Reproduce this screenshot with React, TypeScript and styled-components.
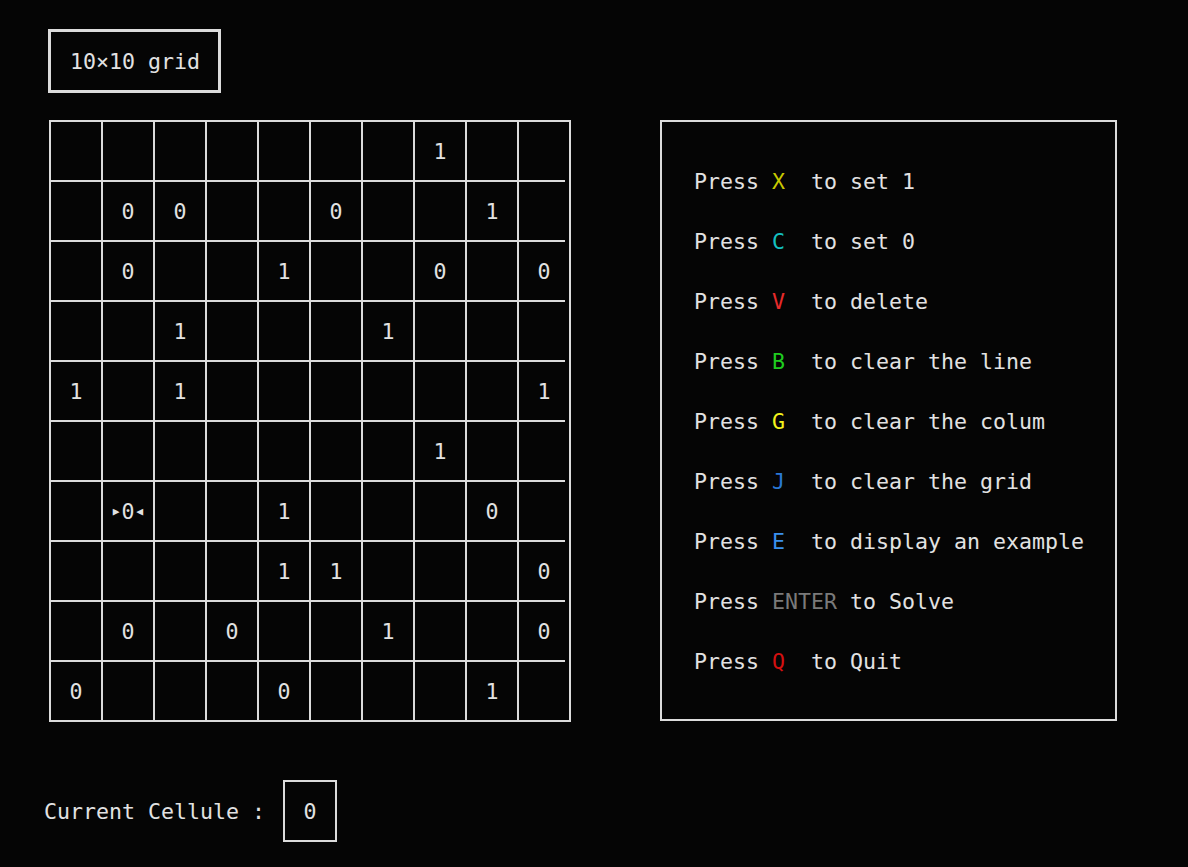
import React from "react";
import styled, { createGlobalStyle } from "styled-components";

const Global = createGlobalStyle`
  html, body { margin: 0; padding: 0; background: #050505; }
  body {
    font-family: "DejaVu Sans Mono", "Liberation Mono", monospace;
    font-size: 21.6px;
    color: #e2e2e2;
  }
`;

const Screen = styled.div`
  min-height: 867px;
  box-sizing: border-box;
  padding: 29px 0 0 44px;
  background: #050505;
`;

const Board = styled.div`
  padding-left: 4px;
`;

const TitleBox = styled.div`
  display: inline-flex;
  align-items: center;
  box-sizing: border-box;
  width: 173px;
  height: 64px;
  padding-left: 19px;
  border: 3px solid #dcdcdc;
  white-space: pre;
`;

const MainRow = styled.div`
  display: flex;
  align-items: flex-start;
  gap: 89px;
  margin-top: 27px;
  padding-left: 1px;
`;

const Grid = styled.div`
  display: grid;
  grid-template-columns: repeat(10, 52px);
  grid-template-rows: repeat(10, 60px);
  border-left: 2px solid #dcdcdc;
  border-top: 2px solid #dcdcdc;
`;

const Cell = styled.div<{ $lastCol: boolean; $lastRow: boolean }>`
  box-sizing: border-box;
  display: flex;
  align-items: center;
  justify-content: center;
  border-right: 2px solid #dcdcdc;
  border-bottom: ${(p) => (p.$lastCol && !p.$lastRow ? "none" : "2px solid #dcdcdc")};
  padding-bottom: ${(p) => (p.$lastCol && !p.$lastRow ? "2px" : "0")};
  background-image: ${(p) =>
    p.$lastCol && !p.$lastRow ? "linear-gradient(#dcdcdc, #dcdcdc)" : "none"};
  background-repeat: no-repeat;
  background-size: 46px 2px;
  background-position: left bottom;
  white-space: pre;
  color: #e2e2e2;
`;

const Marker = styled.span`
  font-size: 11px;
  color: #e2e2e2;
  margin: 0 2px;
`;

const Panel = styled.div`
  box-sizing: border-box;
  width: 457px;
  height: 601px;
  border: 2px solid #dcdcdc;
  padding: 30px 0 0 32px;
`;

const Line = styled.div`
  height: 60px;
  line-height: 60px;
  white-space: pre;
`;

const Key = styled.span<{ $color: string }>`
  color: ${(p) => p.$color};
`;

const StatusRow = styled.div`
  display: flex;
  align-items: center;
  gap: 18px;
  margin-top: 58px;
`;

const StatusLabel = styled.span`
  white-space: pre;
`;

const ValueBox = styled.div`
  box-sizing: border-box;
  width: 54px;
  height: 62px;
  border: 2px solid #dcdcdc;
  display: flex;
  align-items: center;
  justify-content: center;
`;

const rows: string[] = [
  "       1  ",
  " 00  0  1 ",
  " 0  1  0 0",
  "  1   1   ",
  "1 1      1",
  "       1  ",
  " C  1   0 ",
  "    11   0",
  " 0 0  1  0",
  "0   0   1 ",
];

const instructions: { key: string; color: string; gap: string; rest: string }[] = [
  { key: "X", color: "#c9c900", gap: "  ", rest: "to set 1" },
  { key: "C", color: "#14c1c1", gap: "  ", rest: "to set 0" },
  { key: "V", color: "#e82a2a", gap: "  ", rest: "to delete" },
  { key: "B", color: "#1fcc1f", gap: "  ", rest: "to clear the line" },
  { key: "G", color: "#f4f41c", gap: "  ", rest: "to clear the colum" },
  { key: "J", color: "#2a78d6", gap: "  ", rest: "to clear the grid" },
  { key: "E", color: "#3a90ee", gap: "  ", rest: "to display an example" },
  { key: "ENTER", color: "#7a7a7a", gap: " ", rest: "to Solve" },
  { key: "Q", color: "#d41010", gap: "  ", rest: "to Quit" },
];

export default function App() {
  return (
    <>
      <Global />
      <Screen>
        <Board>
          <TitleBox>10×10 grid</TitleBox>
          <MainRow>
            <Grid>
              {rows.map((row, r) =>
                row.split("").map((ch, c) => (
                  <Cell key={`${r}-${c}`} $lastCol={c === 9} $lastRow={r === 9}>
                    {ch === "C" ? (
                      <>
                        <Marker>▶</Marker>0<Marker>◀</Marker>
                      </>
                    ) : ch === " " ? (
                      ""
                    ) : (
                      ch
                    )}
                  </Cell>
                ))
              )}
            </Grid>
            <Panel>
              {instructions.map((it) => (
                <Line key={it.key}>
                  {"Press "}
                  <Key $color={it.color}>{it.key}</Key>
                  {it.gap + it.rest}
                </Line>
              ))}
            </Panel>
          </MainRow>
        </Board>
        <StatusRow>
          <StatusLabel>Current Cellule :</StatusLabel>
          <ValueBox>0</ValueBox>
        </StatusRow>
      </Screen>
    </>
  );
}
